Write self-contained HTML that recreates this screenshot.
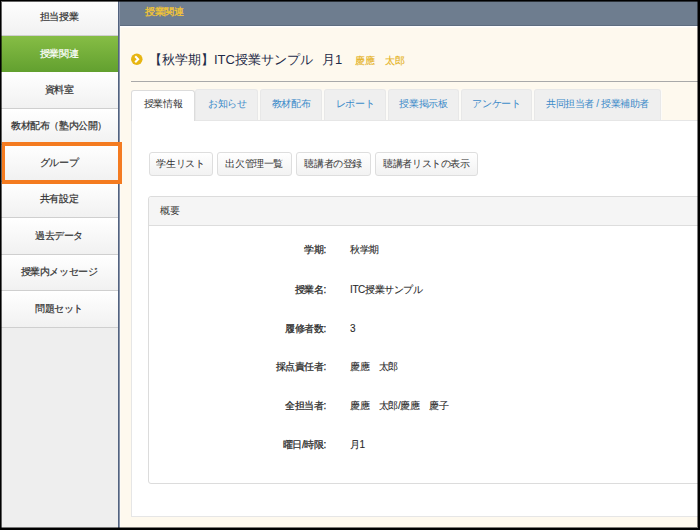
<!DOCTYPE html>
<html lang="ja">
<head>
<meta charset="utf-8">
<style>
html,body{margin:0;padding:0;}
body{width:700px;height:530px;position:relative;overflow:hidden;background:#fef9ee;font-family:"Liberation Sans",sans-serif;font-size:10px;color:#333;letter-spacing:-0.4px;}
.abs{position:absolute;}
#side{left:0;top:0;width:118px;height:530px;background:#eeeeee;}
#sline{left:118px;top:0;width:2px;height:530px;background:linear-gradient(90deg,#52627f 0,#52627f 50%,#8894aa 50%,#8894aa 100%);}
#sline2{left:120px;top:0;width:1px;height:530px;background:rgba(255,255,255,0.35);}
.mi{position:absolute;left:0;width:118px;background:linear-gradient(#ffffff,#f1f1f1);border-bottom:1px solid #cfcfcf;box-sizing:border-box;text-align:center;color:#333;-webkit-text-stroke:0.2px #333;}
.mi span{position:absolute;left:0;right:0;top:50%;transform:translateY(-50%);}
.mi.on{background:linear-gradient(#86bd45,#62a02f);color:#fff;border-bottom:none;-webkit-text-stroke:0.2px #fff;}
#hl{left:2px;top:142px;width:120px;height:42px;box-sizing:border-box;border:4px solid #f47b20;border-width:4px 4px 4px 3px;}
#hdr{left:120px;top:0;width:580px;height:26px;background:#6e7d8f;border-bottom:1px solid #5f6d80;box-sizing:border-box;}
#hwl{left:120px;top:26px;width:580px;height:1px;background:#fff;}
#hwl2{left:120px;top:27px;width:580px;height:1px;background:#fffcf6;}
#hdr span{position:absolute;left:25px;top:6px;color:#f4c633;font-size:10px;line-height:11px;-webkit-text-stroke:0.3px #f4c633;}
#title{left:149px;top:51px;letter-spacing:0;font-size:13px;line-height:17px;color:#1f2b48;white-space:nowrap;}
#tname{left:355px;top:55px;letter-spacing:0;font-size:10px;line-height:12px;color:#e5b21e;white-space:nowrap;-webkit-text-stroke:0.15px #e5b21e;}
#hr{left:131px;top:81px;width:570px;height:1px;background:#a9a9a9;}
.tab{position:absolute;top:89px;height:31px;box-sizing:border-box;background:#efefef;border:1px solid #e8e8e8;box-shadow:1px 0 0 #fcfbf8,-1px 0 0 #fcfbf8;border-bottom:none;border-radius:3px 3px 0 0;color:#3d8bc9;text-align:center;line-height:27px;white-space:nowrap;}
.tab.on{top:90px;background:#fff;color:#333;border-color:#dcdcdc;z-index:2;height:31px;line-height:25px;box-shadow:none;}
#panel{left:131px;top:120px;width:600px;height:397px;background:#fff;border:1px solid #e6e6e6;box-sizing:border-box;}
.btn{position:absolute;top:152px;height:24px;box-sizing:border-box;background:linear-gradient(#ffffff,#f2f2f2);border:1px solid #dedede;border-radius:3px;color:#333;text-align:center;line-height:22px;white-space:nowrap;}
#box{left:148px;top:196px;width:600px;height:288px;box-sizing:border-box;border:1px solid #dcdcdc;border-radius:3px;background:#fff;}
#boxh{left:149px;top:197px;width:560px;height:28px;background:#f5f5f5;border-bottom:1px solid #dddddd;border-radius:3px 0 0 0;}
#boxh span{position:absolute;left:11px;top:8px;line-height:11px;}
.lb{position:absolute;right:374px;white-space:nowrap;line-height:12px;color:#2a2a2a;-webkit-text-stroke:0.25px #2a2a2a;}
.vl{position:absolute;left:350px;white-space:nowrap;line-height:12px;color:#2a2a2a;-webkit-text-stroke:0.1px #2a2a2a;}
#frame{left:0;top:0;width:700px;height:530px;box-sizing:border-box;border-style:solid;border-color:#000;border-width:1px 2px 2px 1px;box-shadow:inset 1px 1px 0 rgba(0,0,0,0.6),inset -1px -1px 0 rgba(0,0,0,0.5);z-index:10;}
</style>
</head>
<body>
<div id="side" class="abs">
  <div class="mi" style="top:-1.5px;height:37px"><span>担当授業</span></div>
  <div class="mi on" style="top:35.5px;height:36px"><span>授業関連</span></div>
  <div class="mi" style="top:71.5px;height:37px"><span>資料室</span></div>
  <div class="mi" style="top:108.5px;height:36.5px"><span>教材配布（塾内公開）</span></div>
  <div class="mi" style="top:145px;height:36.5px"><span>グループ</span></div>
  <div class="mi" style="top:181.5px;height:36.5px"><span>共有設定</span></div>
  <div class="mi" style="top:218px;height:36.5px"><span>過去データ</span></div>
  <div class="mi" style="top:254.5px;height:36.5px"><span>授業内メッセージ</span></div>
  <div class="mi" style="top:291px;height:36.5px"><span>問題セット</span></div>
</div>
<div id="sline" class="abs"></div><div id="sline2" class="abs"></div><div id="hwl" class="abs"></div><div id="hwl2" class="abs"></div>
<div id="hdr" class="abs"><span>授業関連</span></div>

<svg class="abs" style="left:130px;top:52px" width="14" height="14" viewBox="0 0 14 14"><circle cx="6.8" cy="7.3" r="5.75" fill="#e7b512"/><path d="M5.2 4.3 L8.1 7.3 L5.2 10.3" fill="none" stroke="#fff" stroke-width="2.1"/></svg>
<div id="title" class="abs">【秋学期】ITC授業サンプル<span style="margin-left:9px">月1</span></div>
<div id="tname" class="abs">慶應　太郎</div>
<div id="hr" class="abs"></div>

<div class="tab on" style="left:131px;width:64px">授業情報</div>
<div class="tab" style="left:195px;width:62.5px;padding-left:2px">お知らせ</div>
<div class="tab" style="left:260px;width:62px">教材配布</div>
<div class="tab" style="left:324px;width:62px">レポート</div>
<div class="tab" style="left:388px;width:71px">授業掲示板</div>
<div class="tab" style="left:461px;width:71px">アンケート</div>
<div class="tab" style="left:534px;width:127px">共同担当者 / 授業補助者</div>

<div id="panel" class="abs"></div>

<div class="btn" style="left:148.5px;width:64px">学生リスト</div>
<div class="btn" style="left:217px;width:74.5px">出欠管理一覧</div>
<div class="btn" style="left:296px;width:74.5px">聴講者の登録</div>
<div class="btn" style="left:375px;width:103px">聴講者リストの表示</div>

<div id="box" class="abs"></div>
<div id="boxh" class="abs"><span>概要</span></div>

<div class="lb" style="top:244px">学期:</div><div class="vl" style="top:244px">秋学期</div>
<div class="lb" style="top:283.5px">授業名:</div><div class="vl" style="top:283.5px">ITC授業サンプル</div>
<div class="lb" style="top:322.5px">履修者数:</div><div class="vl" style="top:322.5px">3</div>
<div class="lb" style="top:361px">採点責任者:</div><div class="vl" style="top:361px">慶應　太郎</div>
<div class="lb" style="top:399.5px">全担当者:</div><div class="vl" style="top:399.5px">慶應　太郎/慶應　慶子</div>
<div class="lb" style="top:438.5px">曜日/時限:</div><div class="vl" style="top:438.5px">月1</div>

<div id="hl" class="abs"></div>
<div id="frame" class="abs"></div>
</body>
</html>
